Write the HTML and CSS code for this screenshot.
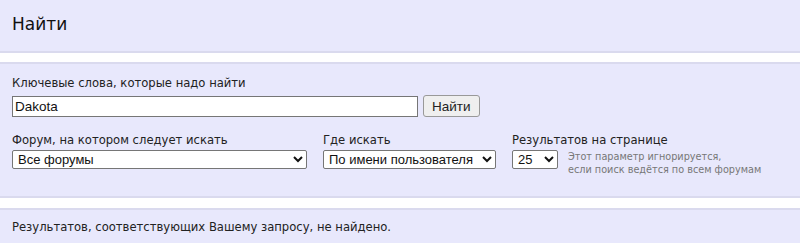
FILE: index.html
```html
<!DOCTYPE html>
<html lang="ru">
<head>
<meta charset="UTF-8" />
<title>Найти</title>
<link rel="stylesheet" href="styles.css">
</head>
<body>

<!-- Заголовок -->
<div class="panel head">
  <h2>Найти</h2>
</div>

<!-- Форма поиска -->
<div class="panel search">
  <div class="label">Ключевые слова, которые надо найти</div>
  <div class="keywords">
    <input type="text" class="kw-input" value="Dakota" />
    <button class="go">Найти</button>
  </div>

  <div class="options">
    <div class="opt">
      <div class="label">Форум, на котором следует искать</div>
      <select class="sel-forum"><option>Все форумы</option></select>
    </div>
    <div class="opt">
      <div class="label">Где искать</div>
      <select class="sel-where"><option>По имени пользователя</option></select>
    </div>
    <div class="opt">
      <div class="label">Результатов на странице</div>
      <div class="per-page">
        <select class="sel-num"><option>25</option></select>
        <div class="note">Этот параметр игнорируется,<br>если поиск ведётся по всем форумам</div>
      </div>
    </div>
  </div>
</div>

<!-- Результат -->
<div class="panel result">
  Результатов, соответствующих Вашему запросу, не найдено.
</div>

</body>
</html>
```

FILE: styles.css
```css
body {
  margin: 0;
  background: #fff;
  font-family: "DejaVu Sans", Verdana, sans-serif;
  font-size: 11.6px;
  color: #222;
}
.panel {
  background: #e8e8fc;
  border-top: 2px solid #dadaee;
  border-bottom: 2px solid #dadaee;
  padding: 0 12px;
}
.head {
  border-top: none;
  height: 51px;
  margin-bottom: 9px;
}
.head h2 {
  margin: 0;
  padding-top: 14px;
  font-weight: normal;
  font-size: 17px;
  color: #111;
}
.search {
  padding-top: 12px;
  height: 120px;
  margin-bottom: 10px;
}
.label {
  color: #222;
  margin-bottom: 5px;
}
.keywords {
  display: flex;
  gap: 5px;
  align-items: center;
}
.kw-input {
  width: 400px;
  height: 17px;
  margin: 0;
  padding: 1px 2px;
  border: 1px solid #767676;
  font-family: "Liberation Sans", Arial, sans-serif;
  font-size: 13.5px;
  color: #111;
}
.go {
  margin: 0;
  height: 22px;
  padding: 0 8px;
  border: 1px solid #999;
  border-radius: 3px;
  background: #efefef;
  font-family: "Liberation Sans", Arial, sans-serif;
  font-size: 13.5px;
  color: #222;
}
.options {
  display: flex;
  margin-top: 16px;
  gap: 16px;
}
.opt .label {
  margin-bottom: 3px;
}
select {
  margin: 0;
  height: 19px;
  padding: 0 1px;
  border: 1px solid #767676;
  border-radius: 2px;
  background: #fff;
  font-family: "Liberation Sans", Arial, sans-serif;
  font-size: 13px;
  line-height: 17px;
  color: #111;
}
.sel-forum { width: 295px; }
.sel-where { width: 173px; }
.sel-num { width: 46px; }
.per-page {
  display: flex;
  gap: 10px;
  align-items: flex-start;
}
.note {
  color: #777;
  font-size: 9.7px;
  line-height: 13px;
}
.result {
  border-bottom: none;
  height: 24px;
  padding-top: 10px;
}
```
